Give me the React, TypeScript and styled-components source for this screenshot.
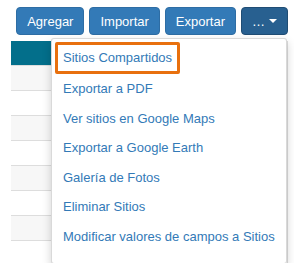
import React from 'react'
import styled, { createGlobalStyle } from 'styled-components'

const GlobalStyle = createGlobalStyle`
	body {
		margin: 0;
		background: #fff;
		font-family: "Liberation Sans", Arial, sans-serif;
	}
`

const Page = styled.div`
	padding: 7px 6px 0 11px;
`

const Toolbar = styled.div`
	position: relative;

	display: flex;
	justify-content: flex-end;
	gap: 5px;
`

const Button = styled.button<{ $active?: boolean }>`
	height: 28px;
	padding: 0 10px;

	border: 1px solid ${props => (props.$active ? '#204d74' : '#2e6da4')};
	border-radius: 4px;

	display: flex;
	align-items: center;
	gap: 4px;

	background-color: ${props => (props.$active ? '#286090' : '#337ab7')};
	color: #fff;

	font-family: "Liberation Sans", Arial, sans-serif;
	font-size: 13px;
`

const Caret = styled.span`
	width: 0;
	height: 0;

	border-top: 4px solid #fff;
	border-left: 4px solid transparent;
	border-right: 4px solid transparent;
`

const Menu = styled.ul`
	position: absolute;
	top: 31px;
	right: 1px;
	z-index: 2;

	width: 234px;
	margin: 0;
	padding: 3px 0 12px;

	border: 1px solid rgba(0, 0, 0, 0.15);
	border-radius: 3px;
	box-shadow: 0 4px 10px rgba(0, 0, 0, 0.18);

	list-style: none;
	background: #fff;
`

const Item = styled.li`
	padding: 6px 11px;

	font-size: 13px;
	line-height: 17.5px;
	color: #337ab7;
	white-space: nowrap;
`

const Highlight = styled.li`
	margin: 0 0 0 3px;
	width: max-content;
	padding: 4px 5px 4px 5px;

	border: 3px solid #e8700e;
	border-radius: 2px;

	font-size: 13px;
	line-height: 18px;
	color: #337ab7;
`

const Table = styled.div`
	margin-top: 6px;

	border-right: 1px solid #ddd;
`

const HeaderRow = styled.div`
	height: 24px;

	background: #036f8b;
`

const Row = styled.div<{ $striped: boolean }>`
	height: 24px;

	border-top: 1px solid #ddd;

	background: ${props => (props.$striped ? '#f7f7f7' : '#fff')};
`

const items = [
	'Exportar a PDF',
	'Ver sitios en Google Maps',
	'Exportar a Google Earth',
	'Galería de Fotos',
	'Eliminar Sitios',
	'Modificar valores de campos a Sitios',
]

const App: React.FC = () => {
	return (
		<Page>
			<GlobalStyle />
			<Toolbar>
				<Button>Agregar</Button>
				<Button>Importar</Button>
				<Button>Exportar</Button>
				<Button $active>… <Caret /></Button>
				<Menu>
					<Highlight>Sitios Compartidos</Highlight>
					{items.map(label => <Item key={label}>{label}</Item>)}
				</Menu>
			</Toolbar>
			<Table>
				<HeaderRow />
				{[0, 1, 2, 3, 4, 5, 6, 7].map(i => <Row key={i} $striped={i % 2 === 0} />)}
			</Table>
		</Page>
	)
}

export default App
